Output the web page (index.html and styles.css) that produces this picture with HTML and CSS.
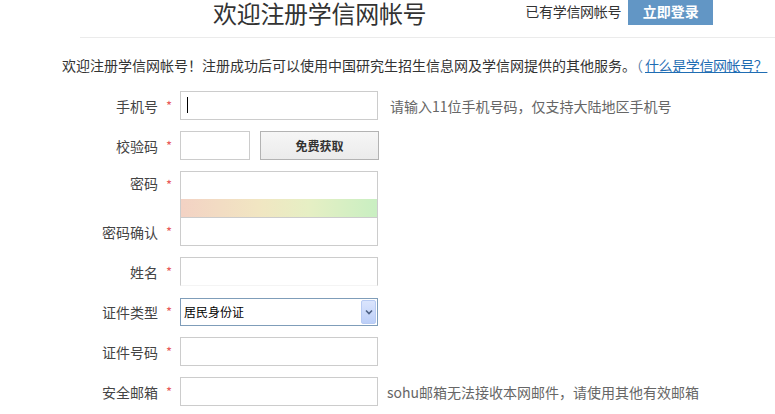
FILE: index.html
```html
<!DOCTYPE html>
<html lang="zh-CN">
<head>
<meta charset="utf-8">
<title>欢迎注册学信网帐号</title>
<link rel="stylesheet" href="styles.css">
</head>
<body>
<div class="page">
  <header class="top">
    <h1 class="title">欢迎注册学信网帐号</h1>
    <div class="account">
      <span class="have">已有学信网帐号</span>
      <a class="login" href="#">立即登录</a>
    </div>
  </header>

  <p class="intro">欢迎注册学信网帐号！注册成功后可以使用中国研究生招生信息网及学信网提供的其他服务。<span class="paren">（</span><a class="what" href="#">什么是学信网帐号？</a></p>

  <form class="form">
    <div class="row">
      <label class="lbl">手机号</label><span class="star">*</span>
      <div class="field-wrap"><input class="inp" type="text"><span class="caret"></span></div>
      <span class="help">请输入11位手机号码，仅支持大陆地区手机号</span>
    </div>

    <div class="row">
      <label class="lbl">校验码</label><span class="star">*</span>
      <input class="inp inp-short" type="text">
      <button class="getcode" type="button">免费获取</button>
    </div>

    <div class="row row-pw">
      <label class="lbl lbl-up">密码</label><span class="star">*</span>
      <input class="inp inp-pw" type="password">
    </div>
    <div class="strength"></div>
    <div class="row row-pw2">
      <label class="lbl">密码确认</label><span class="star">*</span>
      <input class="inp" type="password">
    </div>

    <div class="row">
      <label class="lbl">姓名</label><span class="star">*</span>
      <input class="inp inp-name" type="text">
    </div>

    <div class="row">
      <label class="lbl">证件类型</label><span class="star">*</span>
      <div class="select">
        <span class="select-text">居民身份证</span>
        <span class="select-btn">
          <svg width="8" height="6" viewBox="0 0 8 6"><path d="M1 1.5 L4 4.5 L7 1.5" fill="none" stroke="#4d6185" stroke-width="1.6"/></svg>
        </span>
      </div>
    </div>

    <div class="row">
      <label class="lbl">证件号码</label><span class="star">*</span>
      <input class="inp" type="text">
    </div>

    <div class="row">
      <label class="lbl">安全邮箱</label><span class="star">*</span>
      <input class="inp" type="text">
      <span class="help help-mail">sohu邮箱无法接收本网邮件，请使用其他有效邮箱</span>
    </div>
  </form>
</div>
</body>
</html>
```

FILE: styles.css
```css
html, body {
  margin: 0;
  padding: 0;
  background: #fff;
}

body {
  font-family: "Noto Sans CJK SC", "Liberation Sans", sans-serif;
  color: #333;
  font-size: 14px;
  overflow: hidden;
}

.page {
  width: 775px;
}

.top {
  margin-left: 80px;
  height: 37px;
  border-bottom: 1px solid #ebebeb;
  display: flex;
  align-items: flex-start;
  padding-left: 133px;
}

.title {
  margin: -1px 0 0 0;
  font-size: 24px;
  font-weight: normal;
  line-height: 28px;
  color: #333;
  letter-spacing: -0.3px;
}

.account {
  display: flex;
  align-items: flex-start;
  margin-left: 99px;
}

.have {
  font-size: 14px;
  line-height: 20px;
  color: #333;
  margin-top: 1px;
  letter-spacing: -0.3px;
}

.login {
  display: block;
  margin-left: 7px;
  width: 85px;
  height: 25px;
  line-height: 23px;
  background: #6296c5;
  color: #fff;
  text-decoration: none;
  font-weight: bold;
  font-size: 14px;
  text-align: center;
}

.intro {
  margin: 17px 0 0 62px;
  font-size: 14px;
  line-height: 20px;
  color: #333;
  white-space: nowrap;
}

.paren {
  color: #5a7fa8;
}

.what {
  margin-left: 2px;
  color: #1f6db3;
  text-decoration: underline;
  letter-spacing: -0.4px;
}

.form {
  margin-top: 16px;
  margin-left: 80px;
  display: flex;
  flex-direction: column;
}

.row {
  display: flex;
  align-items: center;
  height: 29px;
  margin-bottom: 11px;
}

.lbl {
  width: 78px;
  text-align: right;
  font-size: 14px;
  line-height: 20px;
  color: #444;
}

.lbl-up {
  margin-top: -4px;
}

.star {
  width: 22px;
  text-align: center;
  color: #e85a5a;
  font-size: 13px;
  line-height: 20px;
}

.inp {
  box-sizing: border-box;
  width: 198px;
  height: 29px;
  margin: 0;
  padding: 0 4px;
  border: 1px solid #ccc;
  background: #fff;
  font-family: inherit;
  font-size: 13px;
  outline: none;
}

.field-wrap {
  position: relative;
  display: flex;
}

.caret {
  position: absolute;
  left: 7px;
  top: 6px;
  width: 1px;
  height: 16px;
  background: #000;
}

.inp-short {
  width: 70px;
}

.getcode {
  box-sizing: border-box;
  margin-left: 10px;
  width: 119px;
  height: 29px;
  border: 1px solid #b3b3b3;
  background: linear-gradient(#f6f6f6, #ebebeb);
  font-family: inherit;
  font-size: 12px;
  font-weight: bold;
  color: #333;
  padding: 0;
}

.help {
  margin-left: 12px;
  font-size: 14px;
  line-height: 20px;
  color: #666;
  white-space: nowrap;
}

.help-mail {
  margin-left: 9px;
}

.row-pw {
  height: 28px;
  margin-bottom: 0;
}

.strength {
  box-sizing: border-box;
  margin-left: 100px;
  width: 198px;
  height: 18px;
  border-left: 1px solid #ccc;
  border-right: 1px solid #ccc;
  background: linear-gradient(90deg, #f3d2c4 0%, #f1e6c2 40%, #e6efc4 65%, #c9efc2 100%);
}

.row-pw2 .inp {
  border-top: 1px solid #ccc;
}

.inp-name {
  border-bottom-color: #f4f4f4;
}

.select {
  box-sizing: border-box;
  width: 198px;
  height: 28px;
  border: 1px solid #7f9db9;
  display: flex;
  align-items: center;
  justify-content: space-between;
  padding: 1px 1px 1px 3px;
  background: #fff;
}

.select-text {
  font-size: 12px;
  color: #000;
  line-height: 16px;
}

.select-btn {
  box-sizing: border-box;
  width: 15px;
  height: 24px;
  border: 1px solid #b8cbf3;
  border-radius: 2px;
  background: linear-gradient(#dbe5fd, #bccff8);
  display: flex;
  align-items: center;
  justify-content: center;
}
```
